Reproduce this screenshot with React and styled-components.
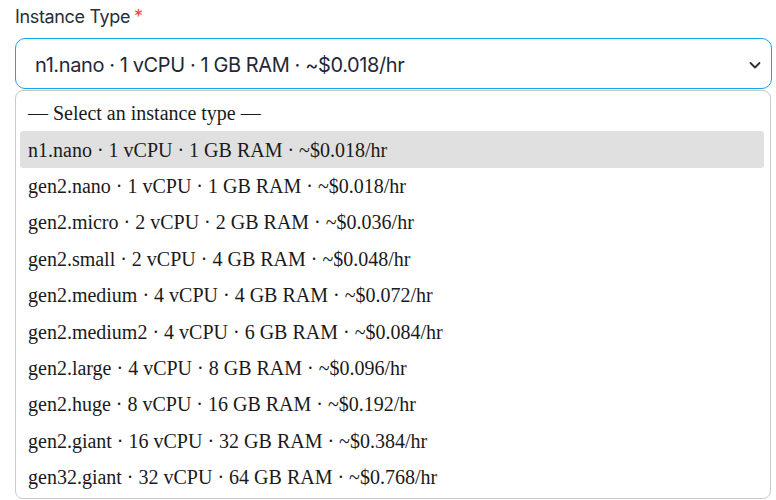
import React from 'react';
import styled, {createGlobalStyle} from 'styled-components';

const OPTIONS = [
    'n1.nano · 1 vCPU · 1 GB RAM · ~$0.018/hr',
    'gen2.nano · 1 vCPU · 1 GB RAM · ~$0.018/hr',
    'gen2.micro · 2 vCPU · 2 GB RAM · ~$0.036/hr',
    'gen2.small · 2 vCPU · 4 GB RAM · ~$0.048/hr',
    'gen2.medium · 4 vCPU · 4 GB RAM · ~$0.072/hr',
    'gen2.medium2 · 4 vCPU · 6 GB RAM · ~$0.084/hr',
    'gen2.large · 4 vCPU · 8 GB RAM · ~$0.096/hr',
    'gen2.huge · 8 vCPU · 16 GB RAM · ~$0.192/hr',
    'gen2.giant · 16 vCPU · 32 GB RAM · ~$0.384/hr',
    'gen32.giant · 32 vCPU · 64 GB RAM · ~$0.768/hr',
];

const GlobalStyle = createGlobalStyle`
    html, body {
        margin: 0;
        padding: 0;
        background: #fff;
    }
`;

const Wrapper = styled.div`
    padding: 5px 4px 0 15px;
    font-family: Inter, "Noto Sans", sans-serif;
`;

const Label = styled.div`
    font-size: 18px;
    line-height: 23px;
    color: #2a2f36;
    margin-bottom: 10px;
    letter-spacing: -0.35px;
`;

const Required = styled.span`
    color: #ef4444;
    margin-left: 4px;
`;

const SelectBox = styled.div`
    display: flex;
    align-items: center;
    justify-content: space-between;
    height: 50px;
    border: 1px solid #18a3ea;
    border-radius: 10px;
    padding: 2px 10px 0 19px;
    box-sizing: border-box;
    font-size: 20px;
    color: #1f2937;
    letter-spacing: -0.4px;
    height: 51px;
`;

const Chevron = styled.svg`
    width: 12px;
    height: 12px;
`;

const List = styled.div`
    margin-top: 1px;
    margin-right: 1px;
    border: 1px solid #cacaca;
    border-radius: 8px;
    padding: 4px 6px 3px 4px;
    font-family: "Liberation Serif", "Times New Roman", serif;
    font-size: 20px;
    color: #1a1a1a;
`;

const Item = styled.div`
    height: 36.4px;
    display: flex;
    align-items: center;
    padding: 1px 0 0 8px;
    box-sizing: border-box;
    border-radius: 3px;
    background: ${props => props.active ? '#e0e0e0' : 'transparent'};
    white-space: nowrap;
`;

export default function App() {
    return (
        <Wrapper>
            <GlobalStyle/>
            <Label>Instance Type<Required>*</Required></Label>
            <SelectBox>
                <span>{OPTIONS[0]}</span>
                <Chevron viewBox="0 0 12 12">
                    <path d="M1.5 4 L6 8.5 L10.5 4" fill="none" stroke="#2b2f36" strokeWidth="1.8"
                          strokeLinecap="round" strokeLinejoin="round"/>
                </Chevron>
            </SelectBox>
            <List>
                <Item>— Select an instance type —</Item>
                {OPTIONS.map((opt, idx) => (
                    <Item key={opt} active={idx === 0}>{opt}</Item>
                ))}
            </List>
        </Wrapper>
    );
}
